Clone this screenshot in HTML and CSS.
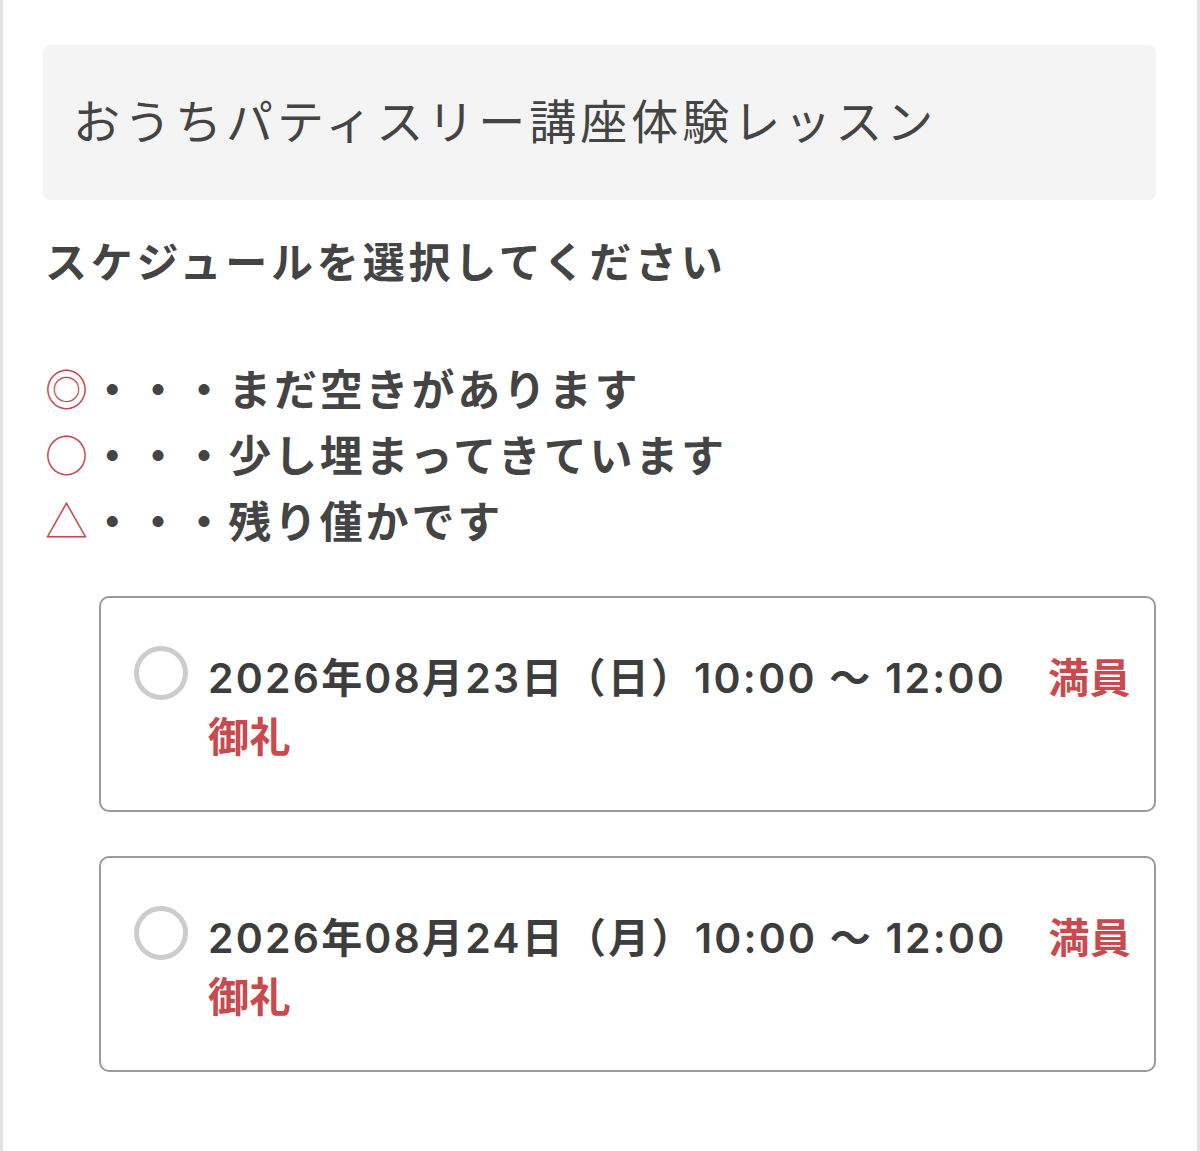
FILE: index.html
```html
<!DOCTYPE html>
<html lang="ja">
<head>
<meta charset="utf-8">
<link rel="stylesheet" href="styles.css">
</head>
<body>
<div class="page">
  <div class="course">おうちパティスリー講座体験レッスン</div>
  <h2 class="heading">スケジュールを選択してください</h2>
  <ul class="legend">
    <li><span class="mark">◎</span>・・・まだ空きがあります</li>
    <li><span class="mark">○</span>・・・少し埋まってきています</li>
    <li><span class="mark">△</span>・・・残り僅かです</li>
  </ul>
  <div class="slots">
    <label class="slot">
      <span class="radio"></span>
      <span class="slot-text">2026年08月23日（日）10:00 ～ 12:00<span class="full">満員御礼</span></span>
    </label>
    <label class="slot">
      <span class="radio"></span>
      <span class="slot-text">2026年08月24日（月）10:00 ～ 12:00<span class="full">満員御礼</span></span>
    </label>
  </div>
</div>
</body>
</html>
```
FILE: styles.css
```css
html, body {
  margin: 0;
  padding: 0;
  background: #fff;
}
body {
  font-family: "Noto Sans CJK JP", "Noto Sans", sans-serif;
  color: #444;
}
.page {
  min-height: 1151px;
  box-sizing: border-box;
  border-left: 3px solid #e2e2e2;
  border-right: 3px solid #e2e2e2;
  padding: 45px 41px 0 40px;
}
.course {
  background: #f4f4f4;
  border-radius: 7px;
  height: 155px;
  box-sizing: border-box;
  display: flex;
  align-items: center;
  padding: 0 0 8px 30px;
  font-size: 47px;
  font-weight: 400;
  letter-spacing: 4px;
  color: #444;
}
.heading {
  margin: 30px 0 0 2px;
  font-size: 42px;
  font-weight: 700;
  letter-spacing: 3.8px;
  line-height: 60px;
}
.legend {
  list-style: none;
  margin: 64px 0 0 2px;
  padding: 0;
  font-size: 43px;
  font-weight: 700;
  letter-spacing: 2.8px;
  line-height: 66px;
}
.mark {
  color: #c8474b;
  font-weight: 300;
}
.slots {
  margin: 44px 0 0 56px;
  display: flex;
  flex-direction: column;
  gap: 44px;
}
.slot {
  display: flex;
  align-items: flex-start;
  border: 2px solid #9a9a9a;
  border-radius: 10px;
  height: 216px;
  box-sizing: border-box;
  padding: 49px 20px 0 33px;
}
.radio {
  flex: none;
  width: 54px;
  height: 54px;
  box-sizing: border-box;
  border: 5px solid #cccccc;
  border-radius: 50%;
  margin-top: -1px;
  margin-right: 20px;
}
.slot-text {
  font-family: "Inter", "Noto Sans CJK JP", sans-serif;
  font-size: 41px;
  font-weight: 600;
  line-height: 56px;
  letter-spacing: 2.2px;
  color: #3d3d3d;
}
.full {
  font-family: "Noto Sans CJK JP", sans-serif;
  color: #c84a4e;
  font-weight: 700;
  letter-spacing: 0.5px;
  margin-left: 42px;
}
```
